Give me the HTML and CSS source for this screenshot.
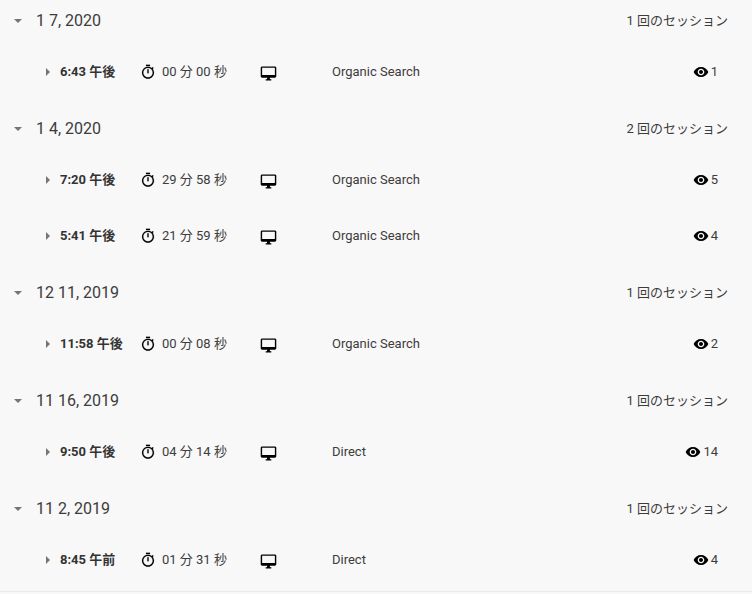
FILE: index.html
```
<!DOCTYPE html>
<html lang="ja">
<head>
  <meta charset="UTF-8">
  <meta name="viewport" content="width=device-width, initial-scale=1.0">
  <title>User Explorer</title>
  <link rel="stylesheet" href="styles.css">
</head>
<body>

<svg class="icon-defs" aria-hidden="true">
  <symbol id="icon-timer" viewBox="0 0 24 24">
    <path d="M15 1H9v2h6V1zm-4 13h2V8h-2v6zm8.03-6.61l1.42-1.42c-.43-.51-.9-.99-1.41-1.41l-1.42 1.42C16.07 4.74 14.12 4 12 4c-4.97 0-9 4.03-9 9s4.02 9 9 9 9-4.03 9-9c0-2.12-.74-4.07-1.97-5.61zM12 20c-3.87 0-7-3.13-7-7s3.13-7 7-7 7 3.13 7 7-3.13 7-7 7z"/>
  </symbol>
  <symbol id="icon-desktop" viewBox="0 0 24 24">
    <path d="M21 2H3c-1.1 0-2 .9-2 2v12c0 1.1.9 2 2 2h7v2H8v2h8v-2h-2v-2h7c1.1 0 2-.9 2-2V4c0-1.1-.9-2-2-2zm0 12H3V4h18v10z"/>
  </symbol>
  <symbol id="icon-eye" viewBox="0 0 24 24">
    <path d="M12 4.500C7 4.500 2.730 7.610 1 12c1.730 4.390 6 7.500 11 7.500s9.270-3.110 11-7.500c-1.730-4.390-6-7.500-11-7.500zM12 17c-2.760 0-5-2.240-5-5s2.240-5 5-5 5 2.240 5 5-2.240 5-5 5zm0-8c-1.660 0-3 1.340-3 3s1.340 3 3 3 3-1.340 3-3-1.340-3-3-3z"/>
  </symbol>
</svg>

<main class="timeline">
  <section class="day">
    <header class="day-header">
      <button class="toggle open" aria-label="1 7, 2020"></button>
      <h2 class="date">1 7, 2020</h2>
      <span class="count">1 回のセッション</span>
    </header>
    <div class="session">
      <button class="toggle" aria-label="6:43 午後"></button>
      <span class="time">6:43 午後</span>
      <span class="duration"><svg class="icon timer"><use href="#icon-timer"/></svg>00 分 00 秒</span>
      <svg class="icon device"><use href="#icon-desktop"/></svg>
      <span class="channel">Organic Search</span>
      <span class="views"><svg class="icon"><use href="#icon-eye"/></svg>1</span>
    </div>
  </section>

  <section class="day">
    <header class="day-header">
      <button class="toggle open" aria-label="1 4, 2020"></button>
      <h2 class="date">1 4, 2020</h2>
      <span class="count">2 回のセッション</span>
    </header>
    <div class="session">
      <button class="toggle" aria-label="7:20 午後"></button>
      <span class="time">7:20 午後</span>
      <span class="duration"><svg class="icon timer"><use href="#icon-timer"/></svg>29 分 58 秒</span>
      <svg class="icon device"><use href="#icon-desktop"/></svg>
      <span class="channel">Organic Search</span>
      <span class="views"><svg class="icon"><use href="#icon-eye"/></svg>5</span>
    </div>
    <div class="session">
      <button class="toggle" aria-label="5:41 午後"></button>
      <span class="time">5:41 午後</span>
      <span class="duration"><svg class="icon timer"><use href="#icon-timer"/></svg>21 分 59 秒</span>
      <svg class="icon device"><use href="#icon-desktop"/></svg>
      <span class="channel">Organic Search</span>
      <span class="views"><svg class="icon"><use href="#icon-eye"/></svg>4</span>
    </div>
  </section>

  <section class="day">
    <header class="day-header">
      <button class="toggle open" aria-label="12 11, 2019"></button>
      <h2 class="date">12 11, 2019</h2>
      <span class="count">1 回のセッション</span>
    </header>
    <div class="session">
      <button class="toggle" aria-label="11:58 午後"></button>
      <span class="time">11:58 午後</span>
      <span class="duration"><svg class="icon timer"><use href="#icon-timer"/></svg>00 分 08 秒</span>
      <svg class="icon device"><use href="#icon-desktop"/></svg>
      <span class="channel">Organic Search</span>
      <span class="views"><svg class="icon"><use href="#icon-eye"/></svg>2</span>
    </div>
  </section>

  <section class="day">
    <header class="day-header">
      <button class="toggle open" aria-label="11 16, 2019"></button>
      <h2 class="date">11 16, 2019</h2>
      <span class="count">1 回のセッション</span>
    </header>
    <div class="session">
      <button class="toggle" aria-label="9:50 午後"></button>
      <span class="time">9:50 午後</span>
      <span class="duration"><svg class="icon timer"><use href="#icon-timer"/></svg>04 分 14 秒</span>
      <svg class="icon device"><use href="#icon-desktop"/></svg>
      <span class="channel">Direct</span>
      <span class="views"><svg class="icon"><use href="#icon-eye"/></svg>14</span>
    </div>
  </section>

  <section class="day">
    <header class="day-header">
      <button class="toggle open" aria-label="11 2, 2019"></button>
      <h2 class="date">11 2, 2019</h2>
      <span class="count">1 回のセッション</span>
    </header>
    <div class="session">
      <button class="toggle" aria-label="8:45 午前"></button>
      <span class="time">8:45 午前</span>
      <span class="duration"><svg class="icon timer"><use href="#icon-timer"/></svg>01 分 31 秒</span>
      <svg class="icon device"><use href="#icon-desktop"/></svg>
      <span class="channel">Direct</span>
      <span class="views"><svg class="icon"><use href="#icon-eye"/></svg>4</span>
    </div>
  </section>
</main>

</body>
</html>
```
FILE: styles.css
```
* {
  box-sizing: border-box;
}

body {
  margin: 0;
  background-color: #f8f8f8;
  color: #3c3c3c;
  font-family: Roboto, "Noto Sans CJK JP", sans-serif;
  font-size: 13px;
  line-height: 20px;
}

.icon-defs {
  display: none;
}

.timeline {
  padding-bottom: 3px;
  border-bottom: 1px solid #ebebeb;
}

.day + .day {
  margin-top: 8px;
}

.day-header {
  display: flex;
  align-items: center;
  height: 42px;
  margin-bottom: 2px;
  padding: 0 24px 0 8px;
}

.date {
  margin: 0 0 0 8px;
  font-size: 16px;
  font-weight: 400;
}

.count {
  margin-left: auto;
}

.session {
  display: grid;
  grid-template-columns: 20px 80px 120px 72px 1fr auto;
  align-items: center;
  height: 56px;
  padding: 0 34px 0 40px;
}

/* arrow buttons */
.toggle {
  display: flex;
  align-items: center;
  justify-content: center;
  width: 20px;
  height: 20px;
  padding: 0;
  border: none;
  background: none;
  cursor: pointer;
}

.session .toggle {
  width: 16px;
}

.toggle::before {
  content: "";
  border-style: solid;
  border-width: 4px 0 4px 4px;
  border-color: transparent transparent transparent #757575;
}

.toggle.open::before {
  border-width: 4px 4px 0 4px;
  border-color: #757575 transparent transparent transparent;
}

.time {
  color: #333;
  font-weight: 700;
}

.duration,
.views {
  display: flex;
  align-items: center;
}

.duration {
  gap: 6px;
}

.views {
  gap: 2px;
}

.icon {
  width: 16px;
  height: 16px;
  fill: #000;
}

.timer {
  stroke: #000;
  stroke-width: 0.2;
}

.device {
  width: 17px;
  height: 17px;
  margin-top: 2px;
}
```
